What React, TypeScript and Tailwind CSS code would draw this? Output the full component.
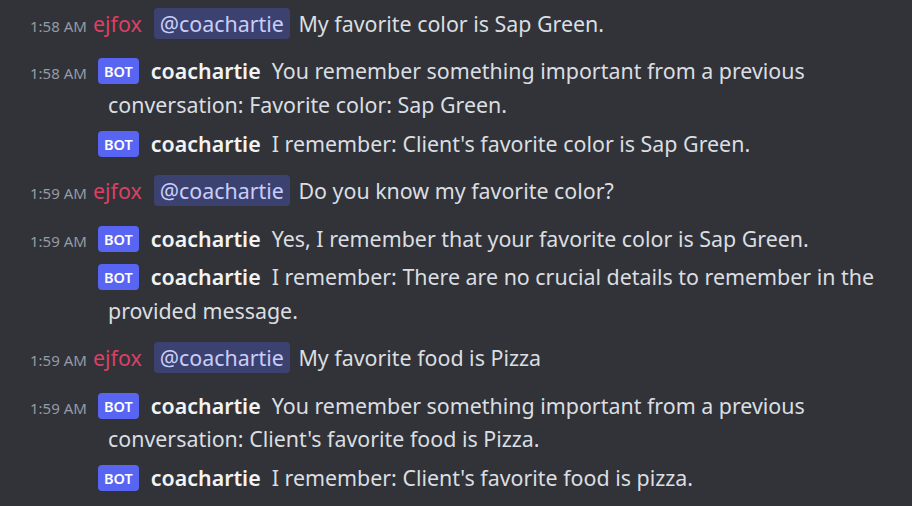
type Line = {
  time?: string;
  author: "ejfox" | "coachartie";
  mention?: boolean;
  text: string;
};

type Group = Line[];

const groups: Group[] = [
  [{ time: "1:58 AM", author: "ejfox", mention: true, text: "My favorite color is Sap Green." }],
  [
    {
      time: "1:58 AM",
      author: "coachartie",
      text: "You remember something important from a previous conversation: Favorite color: Sap Green.",
    },
    { author: "coachartie", text: "I remember: Client's favorite color is Sap Green." },
  ],
  [{ time: "1:59 AM", author: "ejfox", mention: true, text: "Do you know my favorite color?" }],
  [
    { time: "1:59 AM", author: "coachartie", text: "Yes, I remember that your favorite color is Sap Green." },
    {
      author: "coachartie",
      text: "I remember: There are no crucial details to remember in the provided message.",
    },
  ],
  [{ time: "1:59 AM", author: "ejfox", mention: true, text: "My favorite food is Pizza" }],
  [
    {
      time: "1:59 AM",
      author: "coachartie",
      text: "You remember something important from a previous conversation: Client's favorite food is Pizza.",
    },
    { author: "coachartie", text: "I remember: Client's favorite food is pizza." },
  ],
];

const Message = ({ line, first }: { line: Line; first: boolean }) => {
  return (
    <div
      className={`pl-[108px] pr-[20px] -indent-[78px] text-[21.4px] leading-[33.7px] text-[#dbdee1] ${
        first ? "" : "mt-[5px]"
      }`}
    >
      {/* timestamp keeps its slot even when hidden */}
      <span
        className={`inline-block w-[63px] indent-0 text-[15px] leading-none text-[#949ba4] ${
          line.time ? "" : "invisible"
        }`}
      >
        {line.time ?? "1:58 AM"}
      </span>
      {line.author === "ejfox" ? (
        <span className="text-[#dd3f64]">ejfox</span>
      ) : (
        <>
          <span className="relative top-[-2px] ml-[5px] mr-[12px] rounded-[4px] bg-[#5865f2] px-[6px] py-[3px] align-middle text-[14.5px] leading-none font-semibold text-white">
            BOT
          </span>
          <span className="font-semibold text-[#f2f3f5]">coachartie</span>
        </>
      )}
      <span className="inline-block w-[11px] leading-none" />
      {line.mention && (
        <span className="ml-[1px] mr-[3px] rounded-[4px] bg-[#3c4270] px-[6px] py-[1px] text-[#c9cdfb]">
          @coachartie
        </span>
      )}
      {line.mention && " "}
      {line.text}
    </div>
  );
};

export default function App() {
  return (
    <div
      className="min-h-[506px] w-[912px] bg-[#313338] pt-[7px]"
      style={{ fontFamily: '"Noto Sans", Inter, sans-serif' }}
    >
      {groups.map((group, gi) => (
        <div key={gi} className={gi === 0 ? "" : "mt-[13.7px]"}>
          {group.map((line, li) => (
            <Message key={li} line={line} first={li === 0} />
          ))}
        </div>
      ))}
    </div>
  );
}
